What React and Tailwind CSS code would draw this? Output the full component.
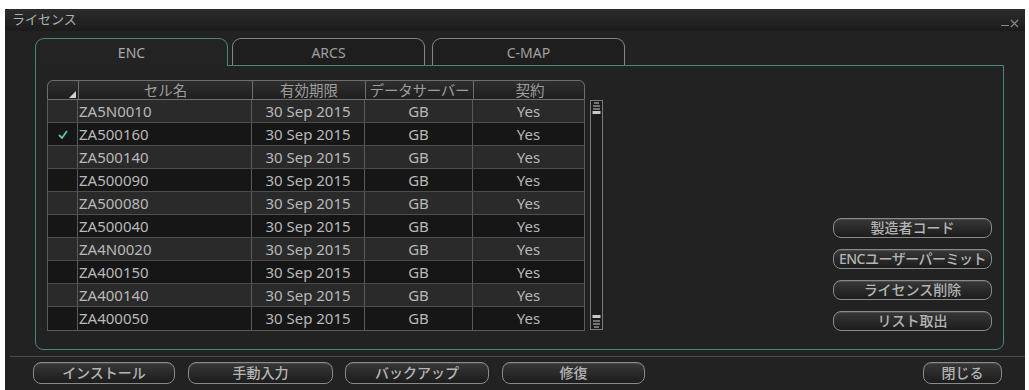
const rows = [
  { name: "ZA5N0010", checked: false },
  { name: "ZA500160", checked: true },
  { name: "ZA500140", checked: false },
  { name: "ZA500090", checked: false },
  { name: "ZA500080", checked: false },
  { name: "ZA500040", checked: false },
  { name: "ZA4N0020", checked: false },
  { name: "ZA400150", checked: false },
  { name: "ZA400140", checked: false },
  { name: "ZA400050", checked: false },
];

const font = { fontFamily: '"Noto Sans", "Noto Sans CJK JP", sans-serif' };

function Btn({ children, className = "" }) {
  return (
    <button
      className={
        "flex items-center justify-center rounded-[8px] border border-[#8a8a8a] bg-gradient-to-b from-[#383838] to-[#1c1c1c] text-[14px] font-medium leading-none text-[#b4b4b4] shadow-[inset_0_1px_0_rgba(255,255,255,0.1)] " +
        className
      }
    >
      {children}
    </button>
  );
}

function Tab({ label, active }) {
  return (
    <div
      className={
        "flex h-[27px] w-[193px] items-center justify-center rounded-t-[9px] border border-b-0 text-[14px] " +
        (active
          ? "relative z-10 -mb-px h-[28px] border-[#4a8582] bg-[#232323] text-[#aaaaaa]"
          : "border-[#858585] bg-[#1e1e1e] text-[#a0a0a0]")
      }
    >
      {label}
    </div>
  );
}

export default function App() {
  return (
    <div className="h-[390px] w-[1029px] overflow-hidden bg-white pl-[5px] pt-[9px]" style={font}>
      <div className="flex h-[381px] w-[1020px] flex-col bg-[#222222]">
        {/* title bar */}
        <div className="flex h-[22px] items-center justify-between bg-gradient-to-b from-[#2c2c2c] to-[#1b1b1b] pl-[7px] pr-[6px]">
          <span className="text-[13px] text-[#b0b0b0]">ライセンス</span>
          <div className="flex items-end gap-[1px] pt-[6px]">
            <span className="mb-[2px] block h-[1px] w-[8px] bg-[#8a8a8a]" />
            <svg width="9" height="9" viewBox="0 0 9 9">
              <path d="M1 1 L8 8 M8 1 L1 8" stroke="#8a8a8a" strokeWidth="1.2" />
            </svg>
          </div>
        </div>

        {/* tabs */}
        <div className="mt-[7px] flex pl-[30px]">
          <Tab label="ENC" active />
          <div className="w-[4px]" />
          <Tab label="ARCS" />
          <div className="w-[7px]" />
          <Tab label="C-MAP" />
        </div>

        {/* panel */}
        <div className="ml-[30px] flex h-[285px] w-[969px] rounded-b-[8px] border border-[#4a8582] pb-[18px] pl-[11px] pr-[11px] pt-[14px]">
          <div className="flex">
            <div className="flex w-[538px] flex-col">
              {/* header */}
              <div className="grid h-[20px] grid-cols-[31px_174px_113px_108px_112px] rounded-t-[6px] border border-[#6e6e6e] bg-gradient-to-b from-[#2e2e2e] to-[#1f1f1f] text-[14.5px] leading-[18px] text-[#9e9e9e]">
                <div className="relative border-r border-[#6e6e6e]">
                  <svg className="absolute bottom-[1px] right-[2px]" width="7" height="7" viewBox="0 0 7 7">
                    <path d="M7 0 L7 7 L0 7 Z" fill="#d0d0d0" />
                  </svg>
                </div>
                <div className="border-r border-[#6e6e6e] text-center">セル名</div>
                <div className="border-r border-[#6e6e6e] text-center">有効期限</div>
                <div className="overflow-hidden whitespace-nowrap border-r border-[#6e6e6e] text-center tracking-[-0.3px]">データサーバー</div>
                <div className="text-center">契約</div>
              </div>
              {/* rows */}
              <div className="border-x border-b border-[#5a5a5a]">
                {rows.map((r, i) => (
                  <div
                    key={r.name}
                    className={
                      "grid h-[23px] grid-cols-[30px_174px_113px_108px_111px] border-b border-[#4e4e4e] text-[15px] leading-[22px] text-[#b8b8b8] last:border-b-0 " +
                      (i % 2 === 0 ? "bg-[#2a2a2a]" : "bg-[#161616]")
                    }
                  >
                    <div className="flex items-center justify-center border-r border-[#5a5a5a]">
                      {r.checked && (
                        <svg width="10" height="9" viewBox="0 0 10 9">
                          <path d="M1 5 L4 8 L9 1" stroke="#5fc2b0" strokeWidth="1.8" fill="none" />
                        </svg>
                      )}
                    </div>
                    <div className="border-r border-[#5a5a5a] pl-[1px]">{r.name}</div>
                    <div className="border-r border-[#5a5a5a] text-center">30 Sep 2015</div>
                    <div className="border-r border-[#5a5a5a] text-center">GB</div>
                    <div className="text-center">Yes</div>
                  </div>
                ))}
              </div>
            </div>
            {/* scrollbar */}
            <div className="ml-[5px] mt-[20px] flex h-[230px] w-[13px] flex-col justify-between border border-[#7a7a7a] bg-[#1c1c1c] p-[1px]">
              <svg width="9" height="14" viewBox="0 0 9 14">
                <path d="M2 1 H7 M1 4 H8 M1 7 H8" stroke="#c8c8c8" strokeWidth="1.2" />
                <rect x="0.5" y="9" width="8" height="3" fill="#c8c8c8" />
              </svg>
              <svg width="9" height="14" viewBox="0 0 9 14">
                <rect x="0.5" y="1" width="8" height="3" fill="#c8c8c8" />
                <path d="M1 7 H8 M1 10 H8 M2 13 H7" stroke="#c8c8c8" strokeWidth="1.2" />
              </svg>
            </div>
          </div>

          <div className="flex-1" />

          {/* right buttons */}
          <div className="flex w-[159px] flex-col gap-[11px] self-end">
            <Btn className="h-[20px] w-[159px]">製造者コード</Btn>
            <Btn className="h-[20px] w-[159px] overflow-hidden whitespace-nowrap tracking-[-0.5px]">ENCユーザーパーミット</Btn>
            <Btn className="h-[20px] w-[159px]">ライセンス削除</Btn>
            <Btn className="h-[20px] w-[159px]">リスト取出</Btn>
          </div>
        </div>

        {/* separator */}
        <div className="ml-[5px] mt-[6px] h-px bg-[#4a4a4a]" />

        {/* bottom buttons */}
        <div className="mt-[5px] flex pl-[28px] pr-[23px]">
          <Btn className="h-[22px] w-[142px]">インストール</Btn>
          <Btn className="ml-[13px] h-[22px] w-[145px]">手動入力</Btn>
          <Btn className="ml-[12px] h-[22px] w-[144px]">バックアップ</Btn>
          <Btn className="ml-[13px] h-[22px] w-[143px]">修復</Btn>
          <div className="flex-1" />
          <Btn className="h-[22px] w-[79px]">閉じる</Btn>
        </div>
      </div>
    </div>
  );
}
